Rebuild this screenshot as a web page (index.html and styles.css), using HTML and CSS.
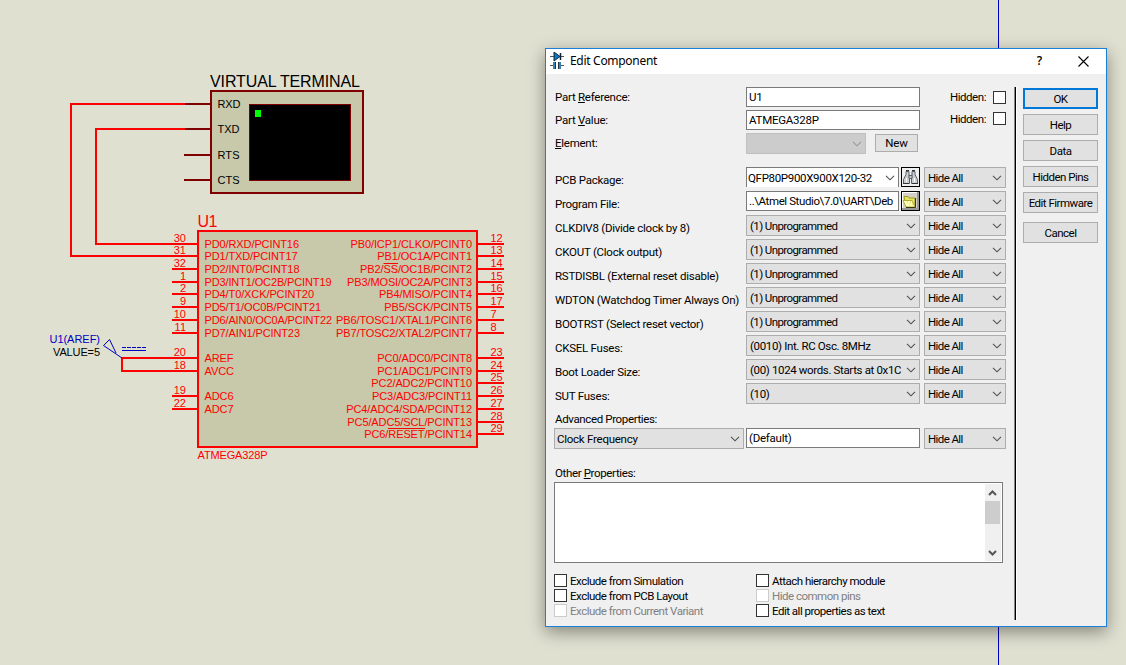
FILE: index.html
```
<!DOCTYPE html>
<html lang="en">
<head>
<meta charset="utf-8">
<title>Edit Component</title>
<link rel="stylesheet" href="styles.css">
</head>
<body>
<svg width="0" height="0" class="defs"><defs>
<symbol id="chev" viewBox="0 0 10 6"><path d="M1 .8 5 4.8 9 .8" fill="none" stroke="currentColor" stroke-width="1.1"/></symbol>
</defs></svg>
<main class="workspace">
<svg class="schematic" width="1126" height="665" viewBox="0 0 1126 665">
  <path class="sheet-edge" d="M998.5 0V665"/>
  <!-- virtual terminal -->
  <rect class="body term" x="211" y="91" width="152" height="102"/>
  <rect class="screen" x="249.500" y="104.500" width="101" height="76"/>
  <rect class="cursor" x="255" y="110" width="6" height="7"/>
  <path class="term-pin" d="M184 104H210M184 129H210M184 155H210M184 180H210"/>
  <g class="ink">
    <text class="big" x="210" y="87" textLength="150">VIRTUAL TERMINAL</text>
    <text x="217.500" y="108" textLength="23">RXD</text>
    <text x="217.500" y="133" textLength="22">TXD</text>
    <text x="217.500" y="159" textLength="22">RTS</text>
    <text x="217.500" y="184" textLength="22">CTS</text>
    <text x="53" y="356" textLength="47">VALUE=5</text>
  </g>
  <!-- microcontroller -->
  <rect class="body chip" x="198" y="231" width="279" height="216"/>
  <path class="wire" d="M185 104H71V256H198M185 129H96V244H198M198 358H122V371H198"/>
  <path class="wire" d="M172 269H198M172 282H198M172 294H198M172 307H198M172 320H198M172 333H198M172 396H198M172 409H198"/>
  <path class="wire" d="M477 244H504M477 256H504M477 269H504M477 282H504M477 294H504M477 307H504M477 320H504M477 333H504M477 358H504M477 371H504M477 383H504M477 396H504M477 409H504M477 422H504M477 434H504"/>
  <path class="bar" d="M383.500 263.500H398M388 428.500H425"/>
  <g class="pin">
    <text class="big" x="197.500" y="227" textLength="20">U1</text>
    <text x="197.500" y="459" textLength="70">ATMEGA328P</text>
    <text x="204.500" y="248" textLength="94.500">PD0/RXD/PCINT16</text>
    <text x="204.500" y="260" textLength="93">PD1/TXD/PCINT17</text>
    <text x="204.500" y="273" textLength="95">PD2/INT0/PCINT18</text>
    <text x="204.500" y="286" textLength="127">PD3/INT1/OC2B/PCINT19</text>
    <text x="204.500" y="298" textLength="109.500">PD4/T0/XCK/PCINT20</text>
    <text x="204.500" y="311" textLength="116.500">PD5/T1/OC0B/PCINT21</text>
    <text x="204.500" y="324" textLength="127.500">PD6/AIN0/OC0A/PCINT22</text>
    <text x="204.500" y="337" textLength="95.500">PD7/AIN1/PCINT23</text>
    <text x="204.500" y="362" textLength="29">AREF</text>
    <text x="204.500" y="375" textLength="29.500">AVCC</text>
    <text x="204.500" y="400" textLength="29">ADC6</text>
    <text x="204.500" y="413" textLength="29">ADC7</text>
    <text x="350.500" y="248" textLength="121.500">PB0/ICP1/CLKO/PCINT0</text>
    <text x="377.200" y="260" textLength="94.800">PB1/OC1A/PCINT1</text>
    <text x="360" y="273" textLength="112">PB2/SS/OC1B/PCINT2</text>
    <text x="347" y="286" textLength="125">PB3/MOSI/OC2A/PCINT3</text>
    <text x="379" y="298" textLength="93">PB4/MISO/PCINT4</text>
    <text x="384.300" y="311" textLength="87.700">PB5/SCK/PCINT5</text>
    <text x="336" y="324" textLength="136">PB6/TOSC1/XTAL1/PCINT6</text>
    <text x="336" y="337" textLength="136">PB7/TOSC2/XTAL2/PCINT7</text>
    <text x="377.300" y="362" textLength="94.700">PC0/ADC0/PCINT8</text>
    <text x="377.300" y="375" textLength="94.700">PC1/ADC1/PCINT9</text>
    <text x="371.300" y="387" textLength="100.700">PC2/ADC2/PCINT10</text>
    <text x="372" y="400" textLength="100">PC3/ADC3/PCINT11</text>
    <text x="346.300" y="413" textLength="125.700">PC4/ADC4/SDA/PCINT12</text>
    <text x="347.300" y="426" textLength="124.700">PC5/ADC5/SCL/PCINT13</text>
    <text x="364.300" y="438" textLength="107.700">PC6/RESET/PCINT14</text>
  </g>
  <g class="pin num-left">
    <text x="186" y="242">30</text><text x="186" y="254">31</text><text x="186" y="267">32</text><text x="186" y="280">1</text>
    <text x="186" y="292">2</text><text x="186" y="305">9</text><text x="186" y="318">10</text><text x="186" y="331">11</text>
    <text x="186" y="356">20</text><text x="186" y="369">18</text><text x="186" y="394">19</text><text x="186" y="407">22</text>
  </g>
  <g class="pin">
    <text x="490.500" y="242">12</text><text x="490.500" y="254">13</text><text x="490.500" y="267">14</text><text x="490.500" y="280">15</text>
    <text x="490.500" y="292">16</text><text x="490.500" y="305">17</text><text x="490.500" y="318">7</text><text x="490.500" y="331">8</text>
    <text x="490.500" y="356">23</text><text x="490.500" y="369">24</text><text x="490.500" y="381">25</text><text x="490.500" y="394">26</text>
    <text x="490.500" y="407">27</text><text x="490.500" y="420">28</text><text x="490.500" y="432">29</text>
  </g>
  <!-- voltage generator on AREF -->
  <text class="gen-name" x="49.500" y="343" textLength="50.500">U1(AREF)</text>
  <path class="gen" d="M122 358 103.500 345.500 109.500 339.500 116 353M122 350.500H146"/>
  <path class="gen" stroke-dasharray="4 1" d="M122 347.500H146"/>
</svg>

<section class="dialog">
  <header class="titlebar">
    <svg class="app-icon" width="14" height="18" viewBox="0 0 14 18"><path d="M0 4.500H14M0 13.500H4M10 13.500H14" stroke="#555"/><path d="M4 0V9L10 4.500Z" fill="#0878c8" stroke="#123"/><path d="M10.500 1V8" stroke="#123" stroke-width="1.500"/><path d="M3 10h3v7H3zM8 10h3v7H8z" fill="#3482b8"/><path d="M5.500 10v7M8.500 10v7" stroke="#234"/></svg>
    <span class="title">Edit Component</span>
    <span class="help">?</span>
    <svg class="close" width="11" height="11" viewBox="0 0 11 11"><path d="M.5.5 10.500 10.500M10.500.5.5 10.500" stroke="#000" stroke-width="1.100"/></svg>
  </header>
  <div class="content">
    <div class="form">
      <div class="row short"><label class="w1">Part <u>R</u>eference:</label><div class="input">U1</div><div class="hidden-opt"><span>Hidden:</span><i class="box"></i></div></div>
      <div class="row short"><label class="w1">Part <u>V</u>alue:</label><div class="input">ATMEGA328P</div><div class="hidden-opt up"><span>Hidden:</span><i class="box"></i></div></div>
      <div class="row element"><label class="w1"><u>E</u>lement:</label><div class="element-group"><div class="combo off"><span></span><svg class="chev"><use href="#chev"/></svg></div><div class="btn new">New</div></div></div>

      <div class="row prop"><label>PCB Package:</label><div class="with-tool"><div class="input edit-combo"><span>QFP80P900X900X120-32</span><svg class="chev"><use href="#chev"/></svg></div><div class="tool"><svg width="17" height="17" viewBox="0 0 17 17"><g fill="#c9ced2" stroke="#596066"><path d="M4 2.500h3v4l.5 3v5h-6v-4L4 5.500z"/><path d="M10 2.500h3v3l2.500 5v4h-6v-5l.5-3z"/><path d="M7 6.500h3v3H7z"/></g><path d="M4.500 9v4M12.500 9v4" stroke="#fff"/><path d="M4 1.500h3M10 1.500h3M1 14.500h6M10 14.500h6" stroke="#333"/></svg></div></div><div class="combo"><span>Hide All</span><svg class="chev"><use href="#chev"/></svg></div></div>
      <div class="row prop"><label>Program File:</label><div class="with-tool"><div class="input path"><span>..\Atmel Studio\7.0\UART\Deb</span></div><div class="tool raised"><svg width="17" height="17" viewBox="0 0 17 17"><path d="M2 3.500h4l1 1.500h6v9H4z" fill="#e7e45d" stroke="#a09c22"/><path d="M1 7.500h9l3 6.500H4z" fill="#ffffb3" stroke="#b2aa39"/><path d="M13.500 5v9.500H4" fill="none" stroke="#38340b"/><path d="M5 9h1m2 0h1m-2 2h1m2 0h1" stroke="#e8bf69"/></svg></div></div><div class="combo"><span>Hide All</span><svg class="chev"><use href="#chev"/></svg></div></div>
      <div class="row prop"><label>CLKDIV8 (Divide clock by 8)</label><div class="combo"><span>(1) Unprogrammed</span><svg class="chev"><use href="#chev"/></svg></div><div class="combo"><span>Hide All</span><svg class="chev"><use href="#chev"/></svg></div></div>
      <div class="row prop"><label>CKOUT (Clock output)</label><div class="combo"><span>(1) Unprogrammed</span><svg class="chev"><use href="#chev"/></svg></div><div class="combo"><span>Hide All</span><svg class="chev"><use href="#chev"/></svg></div></div>
      <div class="row prop"><label>RSTDISBL (External reset disable)</label><div class="combo"><span>(1) Unprogrammed</span><svg class="chev"><use href="#chev"/></svg></div><div class="combo"><span>Hide All</span><svg class="chev"><use href="#chev"/></svg></div></div>
      <div class="row prop"><label>WDTON (Watchdog Timer Always On)</label><div class="combo"><span>(1) Unprogrammed</span><svg class="chev"><use href="#chev"/></svg></div><div class="combo"><span>Hide All</span><svg class="chev"><use href="#chev"/></svg></div></div>
      <div class="row prop"><label>BOOTRST (Select reset vector)</label><div class="combo"><span>(1) Unprogrammed</span><svg class="chev"><use href="#chev"/></svg></div><div class="combo"><span>Hide All</span><svg class="chev"><use href="#chev"/></svg></div></div>
      <div class="row prop"><label>CKSEL Fuses:</label><div class="combo numeric"><span>(0010) Int. RC Osc. 8MHz</span><svg class="chev"><use href="#chev"/></svg></div><div class="combo"><span>Hide All</span><svg class="chev"><use href="#chev"/></svg></div></div>
      <div class="row prop"><label>Boot Loader Size:</label><div class="combo numeric"><span>(00) 1024 words. Starts at 0x1C0</span><svg class="chev"><use href="#chev"/></svg></div><div class="combo"><span>Hide All</span><svg class="chev"><use href="#chev"/></svg></div></div>
      <div class="row prop"><label>SUT Fuses:</label><div class="combo numeric"><span>(10)</span><svg class="chev"><use href="#chev"/></svg></div><div class="combo"><span>Hide All</span><svg class="chev"><use href="#chev"/></svg></div></div>

      <div class="caption advanced">Advanced Properties:</div>
      <div class="row"><div class="combo adv-name"><span>Clock Frequency</span><svg class="chev"><use href="#chev"/></svg></div><div class="input">(Default)</div><div class="combo"><span>Hide All</span><svg class="chev"><use href="#chev"/></svg></div></div>

      <div class="caption other">Other <u>P</u>roperties:</div>
      <div class="textarea"><div class="scrollbar"><svg width="9" height="6" viewBox="0 0 9 6"><path d="M1 5 4.500 1.500 8 5" fill="none" stroke="#555" stroke-width="2"/></svg><div class="thumb"></div><svg width="9" height="6" viewBox="0 0 9 6"><path d="M1 1 4.500 4.500 8 1" fill="none" stroke="#555" stroke-width="2"/></svg></div></div>
      <div class="checks">
        <div class="check"><i class="box"></i>Exclude from Simulation</div><div class="check"><i class="box"></i>Attach hierarchy module</div>
        <div class="check"><i class="box"></i>Exclude from PCB Layout</div><div class="check dim"><i class="box"></i>Hide common pins</div>
        <div class="check dim"><i class="box"></i>Exclude from Current Variant</div><div class="check"><i class="box"></i>Edit all properties as text</div>
      </div>
    </div>
    <div class="divider"></div>
    <div class="actions">
      <div class="btn primary">OK</div><div class="btn">Help</div><div class="btn">Data</div><div class="btn">Hidden Pins</div><div class="btn">Edit Firmware</div><div class="btn cancel">Cancel</div>
    </div>
  </div>
</section>
</main>
</body>
</html>
```
FILE: styles.css
```
* { box-sizing: border-box; }
body { margin: 0; background: #dfe0d0; font: 11.5px/14px Roboto, "Liberation Sans", sans-serif; letter-spacing: -0.25px; color: #000; }
.defs { position: absolute; }
.workspace { position: relative; width: 1126px; height: 665px; overflow: hidden; }

.schematic { display: block; font: 11px "Liberation Sans", Arial, sans-serif; letter-spacing: 0; }
.schematic .big { font-size: 16px; }
.sheet-edge { stroke: #0000c0; }
.body { fill: #c8c8aa; stroke-width: 2; }
.term { stroke: #800000; }
.chip { stroke: #f00; }
.screen { fill: #000; stroke: #800000; }
.cursor { fill: #0f0; }
.term-pin { stroke: #800000; stroke-width: 2; }
.wire { fill: none; stroke: #f00; stroke-width: 2; }
.bar { stroke: #f00; }
.pin { fill: #f00; }
.num-left { text-anchor: end; }
.gen-name { fill: #0000c0; }
.gen { fill: none; stroke: #0000c0; }

.dialog { position: absolute; left: 545px; top: 48px; width: 562px; height: 579px; border: 1px solid #1a7fd8; background: #f0f0f0; box-shadow: 0 5px 16px rgba(0, 0, 0, .4); }
.titlebar { display: flex; align-items: center; height: 25px; padding: 0 17px 1px 4px; background: #fff; }
.app-icon { margin-right: 6px; }
.title { flex: 1; font: 12px/16px "Noto Sans", sans-serif; letter-spacing: -0.3px; }
.help { margin-right: 36px; font: 600 12px/16px "Open Sans", sans-serif; }
.content { display: flex; padding: 13px 8px 0; }
.form { width: 452px; }
.divider { width: 3px; height: 533px; margin-left: 8px; border-left: 1px solid #888; background: linear-gradient(90deg, #000 1px, #fff 1px); }

.row { display: grid; grid-template-columns: 192px 174px 82px; height: 21px; margin-bottom: 3px; }
.row > :nth-child(3) { margin-left: 4px; width: 82px; }
.row label { padding: 5px 0 0 1px; line-height: 16px; white-space: nowrap; }
.row label.w1 { padding-top: 2px; }
.row.short { height: 20px; }
.row.element { margin-bottom: 13px; }
.input { height: 20px; border: 1px solid #7a7a7a; background: #fff; padding: 2px; white-space: nowrap; overflow: hidden; }
.combo { display: flex; align-items: center; height: 21px; border: 1px solid #adadad; background: #e1e1e1; padding: 0 3px; white-space: nowrap; letter-spacing: -0.6px; }
.combo span { flex: 1; min-width: 0; overflow: hidden; margin-right: 5px; }
.numeric { letter-spacing: -0.36px; }
.chev { width: 10px; height: 6px; color: #505050; flex: none; }
.off { width: 120px; background: #ccc; border-color: #bfbfbf; }
.off .chev { color: #999; }
.element-group { display: flex; }
.btn { display: flex; align-items: center; justify-content: center; height: 21px; border: 1px solid #adadad; background: #e1e1e1; white-space: nowrap; letter-spacing: -0.5px; }
.new { width: 43px; height: 18px; margin: 1px 0 0 9px; flex: none; letter-spacing: -0.2px; }
.with-tool { display: flex; justify-content: space-between; }
.edit-combo { display: flex; align-items: center; width: 153px; border-bottom: 0; padding: 0 3px 0 1px; letter-spacing: -0.32px; }
.edit-combo span { flex: 1; }
.path { width: 153px; letter-spacing: -0.4px; }
.tool { display: flex; align-items: center; justify-content: center; width: 19px; height: 20px; border: 1px solid #000; background: #f0f0f0; }
.raised { box-shadow: inset -2px -2px #999, inset 1px 1px #fff; background: #d4d0c8; }
.hidden-opt { display: flex; justify-content: flex-end; align-items: center; gap: 7px; letter-spacing: -0.45px; }
.up { height: 17px; }
.box { display: block; width: 13px; height: 13px; border: 1px solid #333; background: #fff; flex: none; }
.caption { height: 18px; line-height: 18px; padding-left: 1px; letter-spacing: -0.36px; }
.advanced { margin-top: 6px; }
.row .adv-name { width: 190px; padding-left: 2px; letter-spacing: -0.25px; }
.other { margin-top: 15px; }
.textarea { display: flex; justify-content: flex-end; width: 449px; height: 81px; border: 1px solid #7a7a7a; background: #fff; padding: 1px; }
.scrollbar { display: flex; flex-direction: column; align-items: flex-start; width: 16px; background: #f0f0f0; padding: 6px 0 5px; }
.scrollbar svg { margin-left: 3px; flex: none; }
.thumb { width: 15px; height: 23px; margin: 5px 0 auto; background: #cdcdcd; }
.checks { display: grid; grid-template-columns: 202px 1fr; row-gap: 2px; margin-top: 11px; letter-spacing: -0.5px; }
.check { display: flex; align-items: center; gap: 3px; height: 13px; white-space: nowrap; }
.dim { color: #808080; }
.dim .box { border-color: #ccc; }
.actions { display: flex; flex-direction: column; gap: 5px; width: 75px; margin: 1px 0 0 6px; }
.primary { border: 2px solid #0078d7; }
.cancel { margin-top: 4px; }
```
